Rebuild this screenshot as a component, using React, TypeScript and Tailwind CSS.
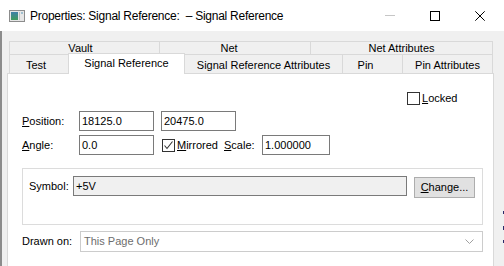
import React from "react";

const border = "border-[#d9d9d9]";

function Check({ checked }: { checked?: boolean }) {
  return (
    <div className="w-[13px] h-[13px] border border-[#333333] bg-white flex items-center justify-center shrink-0">
      {checked && (
        <svg width="11" height="11" viewBox="0 0 11 11">
          <path d="M1.5 5.5 L4 8.5 L9.5 1.5" fill="none" stroke="#333333" strokeWidth="1.1" />
        </svg>
      )}
    </div>
  );
}

function Input({ value, w }: { value: string; w: string }) {
  return (
    <div className={`${w} h-[20px] border border-[#7a7a7a] bg-white flex items-center pl-[2px] text-black`}>
      {value}
    </div>
  );
}

export default function App() {
  return (
    <div className="w-[504px] h-[266px] overflow-hidden flex flex-col bg-[#f0f0f0] font-['Liberation_Sans',Arial,sans-serif] text-[11px] text-black leading-none">
      {/* Title bar */}
      <div className="h-[31px] bg-white flex items-center shrink-0">
        <div className="ml-[9px] w-[16px] h-[12px]">
          <svg width="16" height="12" viewBox="0 0 16 12">
            <rect x="0.5" y="0.5" width="15" height="11" fill="#e6e6e6" stroke="#8c8c8c" />
            <defs>
              <linearGradient id="g1" x1="0" y1="0" x2="0" y2="1">
                <stop offset="0" stopColor="#3f7fa8" />
                <stop offset="1" stopColor="#3f9a5a" />
              </linearGradient>
            </defs>
            <rect x="2" y="2" width="7" height="8" fill="url(#g1)" />
            <rect x="10" y="2" width="1" height="8" fill="#c0c0c0" />
            <rect x="12" y="2" width="2" height="2" fill="#9fbfcf" />
          </svg>
        </div>
        <div className="ml-[5px] text-[12px] tracking-[-0.25px] text-black">
          Properties: Signal Reference:&nbsp; – Signal Reference
        </div>
        <div className="ml-auto mr-[2px] flex h-full">
          <div className="w-[45px] h-full flex items-center justify-center">
            <div className="w-[10px] h-px bg-[#c6c6c6]" />
          </div>
          <div className="w-[45px] h-full flex items-center justify-center">
            <div className="w-[10px] h-[10px] border border-black" />
          </div>
          <div className="w-[45px] h-full flex items-center justify-center">
            <svg width="10" height="10" viewBox="0 0 10 10">
              <path d="M0.3 0.3 L9.7 9.7 M9.7 0.3 L0.3 9.7" stroke="#000" strokeWidth="1" />
            </svg>
          </div>
        </div>
      </div>

      {/* Body */}
      <div className="flex flex-1 min-h-0">
        <div className="w-[2px] bg-[#8c8c8c] shrink-0" />
        <div className="ml-[5px] w-[487px] flex flex-col pt-[10px]">
          {/* Tab row 1 */}
          <div className={`flex ml-[2px] h-[16px]`}>
            <div className={`w-[150px] border-l border-t ${border} flex items-center justify-center pt-px pr-[8px]`}>Vault</div>
            <div className={`w-[151px] border-l border-t ${border} flex items-center justify-center pt-px pr-[12px]`}>Net</div>
            <div className={`w-[183px] border-l border-t border-r ${border} flex items-center justify-center pt-px`}>Net Attributes</div>
          </div>
          {/* Tab row 2 */}
          <div className="flex ml-[2px] h-[19px]">
            <div className={`w-[59px] border-l border-t ${border} flex items-center justify-center pt-[3px] pr-[6px]`}>Test</div>
            <div className={`relative z-10 -mt-[1px] h-[21px] w-[117px] border-l border-t border-r ${border} bg-white flex items-center justify-center pb-[2px]`}>
              Signal Reference
            </div>
            <div className={`w-[157px] border-t ${border} flex items-center justify-center pt-[3px]`}>Signal Reference Attributes</div>
            <div className={`w-[60px] border-l border-t ${border} flex items-center justify-center pt-[3px] pr-[14px]`}>Pin</div>
            <div className={`w-[91px] border-l border-t border-r ${border} flex items-center justify-center pt-[3px]`}>Pin Attributes</div>
          </div>
          {/* Panel */}
          <div className={`h-[200px] shrink-0 border ${border} bg-white pl-[14px] flex flex-col`}>
            <div className="mt-[18px] ml-[385px] flex items-center h-[13px]">
              <Check />
              <span className="ml-[2px]"><u>L</u>ocked</span>
            </div>
            <div className="mt-[6px] flex items-center h-[20px]">
              <div className="w-[57px]"><u>P</u>osition:</div>
              <Input value="18125.0" w="w-[75px]" />
              <div className="ml-[7px]">
                <Input value="20475.0" w="w-[75px]" />
              </div>
            </div>
            <div className="mt-[4px] flex items-center h-[20px]">
              <div className="w-[57px]"><u>A</u>ngle:</div>
              <Input value="0.0" w="w-[75px]" />
              <div className="ml-[8px] w-[62px] flex items-center">
                <Check checked />
                <span className="ml-[2px]"><u>M</u>irrored</span>
              </div>
              <div className="w-[38px]"><u>S</u>cale:</div>
              <Input value="1.000000" w="w-[68px]" />
            </div>
            {/* Group */}
            <div className="mt-[13px] w-[461px] h-[57px] border border-[#dcdcdc] flex items-start pt-[7px] pl-[6px]">
              <div className="w-[44px] h-[20px] flex items-center">Symbol:</div>
              <div className="w-[334px] h-[20px] border border-[#7a7a7a] bg-[#f0f0f0] flex items-center pl-[2px]">+5V</div>
              <div className="ml-[7px] mt-[1px] w-[61px] h-[21px] border border-[#adadad] bg-[#e1e1e1] flex items-center justify-center">
                <span><u>C</u>hange...</span>
              </div>
            </div>
            <div className="mt-[6px] flex items-center h-[21px]">
              <div className="w-[58px]">Drawn on:</div>
              <div className="w-[403px] h-[21px] border border-[#cccccc] bg-white flex items-center pl-[3px] text-[#6d6d6d]">
                This Page Only
                <svg className="ml-auto mr-[8px]" width="9" height="5" viewBox="0 0 9 5">
                  <path d="M0.5 0.5 L4.5 4.5 L8.5 0.5" fill="none" stroke="#a0a0a0" strokeWidth="1" />
                </svg>
              </div>
            </div>
          </div>
        </div>
        <div className="w-[9px] shrink-0" />
        <div className="w-px shrink-0 flex flex-col">
          <div className="h-[180px] bg-[#f0f0f0]" />
          <div className="h-[3px] bg-[#2a2a6a]" />
          <div className="h-[12px]" />
          <div className="h-[4px] bg-[#2a2a6a]" />
          <div className="h-[10px]" />
          <div className="h-[3px] bg-[#2a2a6a]" />
        </div>
      </div>
    </div>
  );
}
